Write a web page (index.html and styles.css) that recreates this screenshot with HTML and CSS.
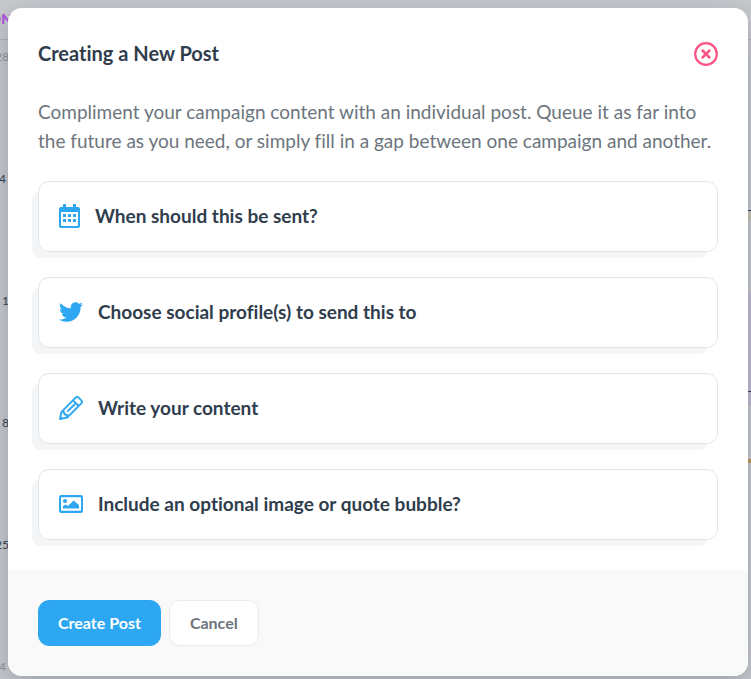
FILE: index.html
```html
<!DOCTYPE html>
<html lang="en">
<head>
    <meta charset="UTF-8">
    <meta name="viewport" content="width=device-width, initial-scale=1.0">
    <title>Creating a New Post</title>
    <link rel="stylesheet" href="styles.css">
</head>
<body>
    <!-- Calendar behind the modal -->
    <div class="calendar">
        <div class="calendar-head"><span>ON</span></div>
        <div class="calendar-row muted"><span>28</span></div>
        <div class="calendar-row"><span class="early">4</span><i class="event navy"></i></div>
        <div class="calendar-row"><span>1</span><i class="event today"></i></div>
        <div class="calendar-row"><span>8</span><i class="event orange"></i></div>
        <div class="calendar-row"><span>25</span></div>
        <div class="calendar-row muted"><span class="early">4</span></div>
    </div>

    <div class="overlay">
        <form class="modal" role="dialog" aria-labelledby="modal-title">
            <div class="modal-body">
                <div class="modal-header">
                    <h1 id="modal-title">Creating a New Post</h1>
                    <button type="button" class="close-btn" aria-label="Close">
                        <svg width="24" height="24" viewBox="0 0 24 24" fill="none" stroke="currentColor">
                            <circle cx="12" cy="12" r="10.8" stroke-width="2.2"/>
                            <path d="M7.900 7.900l8.200 8.200M16.100 7.900l-8.200 8.200" stroke-width="2.700"/>
                        </svg>
                    </button>
                </div>

                <p class="intro">Compliment your campaign content with an individual post. Queue it as far into the future as you need, or simply fill in a gap between one campaign and another.</p>

                <div class="steps">
                    <button type="button" class="step">
                        <svg width="21" height="24" viewBox="0 0 21 24" fill="currentColor">
                            <path fill-rule="evenodd" d="M4 0h3v3h7V0h3v3h2a2 2 0 0 1 2 2v17a2 2 0 0 1-2 2H2a2 2 0 0 1-2-2V5a2 2 0 0 1 2-2h2zM2 8v13.500l.5.5h16l.5-.5V8z"/>
                            <path d="M4 10h3v3H4zM9 10h3v3H9zM14 10h3v3h-3zM4 15h3v3H4zM9 15h3v3H9zM14 15h3v3h-3z"/>
                        </svg>
                        <span>When should this be sent?</span>
                    </button>
                    <button type="button" class="step">
                        <svg width="24" height="24" viewBox="0 0 512 512" fill="currentColor">
                            <path d="M459.370 151.716c.325 4.548.325 9.097.325 13.645 0 138.720-105.583 298.558-298.558 298.558-59.452 0-114.680-17.219-161.137-47.106 8.447.974 16.568 1.299 25.340 1.299 49.055 0 94.213-16.568 130.274-44.832-46.132-.975-84.792-31.188-98.112-72.772 6.498.974 12.995 1.624 19.818 1.624 9.421 0 18.843-1.300 27.614-3.573-48.081-9.747-84.143-51.980-84.143-102.985v-1.299c13.969 7.797 30.214 12.670 47.431 13.319-28.264-18.843-46.781-51.005-46.781-87.391 0-19.492 5.197-37.360 14.294-52.954 51.655 63.675 129.300 105.258 216.365 109.807-1.624-7.797-2.599-15.918-2.599-24.040 0-57.828 46.782-104.934 104.934-104.934 30.213 0 57.502 12.670 76.670 33.137 23.715-4.548 46.456-13.320 66.599-25.340-7.798 24.366-24.366 44.833-46.132 57.827 21.117-2.273 41.584-8.122 60.426-16.243-14.292 20.791-32.161 39.308-52.628 54.253z"/>
                        </svg>
                        <span>Choose social profile(s) to send this to</span>
                    </button>
                    <button type="button" class="step">
                        <svg width="24" height="24" viewBox="0 0 24 24" fill="none" stroke="currentColor" stroke-width="1.9" stroke-linejoin="round">
                            <path d="M1 23l1.500-7.200L16.600 1.700a2.200 2.200 0 0 1 3.100 0l2.600 2.600a2.200 2.200 0 0 1 0 3.100L8.200 21.500z"/>
                            <path d="M14 4.300l5.700 5.700M2.500 15.800l2.700.3.300 2.400 2.400.3.300 2.700M8.300 15.700l7.700-7.700"/>
                            <path d="M1 23l.5-3 2.500 2.500z" fill="currentColor" stroke="none"/>
                        </svg>
                        <span>Write your content</span>
                    </button>
                    <button type="button" class="step">
                        <svg width="24" height="24" viewBox="0 0 24 24" fill="currentColor">
                            <path fill-rule="evenodd" d="M2 3h20a2 2 0 0 1 2 2v14a2 2 0 0 1-2 2H2a2 2 0 0 1-2-2V5a2 2 0 0 1 2-2zm0 2.300v13.400h20V5.300z"/>
                            <circle cx="6" cy="9" r="2"/>
                            <path d="M4 16.500V14l2.500-1.500L9 14l5.500-5.500L20 13v3.500z"/>
                        </svg>
                        <span>Include an optional image or quote bubble?</span>
                    </button>
                </div>
            </div>

            <div class="modal-footer">
                <button type="submit" class="btn btn-primary">Create Post</button>
                <button type="button" class="btn btn-default">Cancel</button>
            </div>
        </form>
    </div>
</body>
</html>
```
FILE: styles.css
```css
* {
    box-sizing: border-box;
}
body {
    margin: 0;
    min-height: 100vh;
    overflow: hidden;
    font-family: Avenir, Lato, sans-serif;
    font-variant-ligatures: none;
    color: #2f3d4d;
    background: #c9cbcf;
}
button {
    font-family: inherit;
    font-variant-ligatures: inherit;
    cursor: pointer;
}

/* Calendar */
.calendar {
    height: 100vh;
    overflow: hidden;
    font-size: 12px;
    line-height: 16px;
}
.calendar-head {
    display: flex;
    height: 40px;
    padding-top: 11px;
    border-bottom: 1px solid #b3b6ba;
    color: #b050e0;
    font-size: 14px;
    font-weight: 900;
}
.calendar-row {
    display: flex;
    justify-content: space-between;
    height: 122px;
    padding-top: 9px;
}
.calendar span {
    display: flex;
    justify-content: flex-end;
    width: 9px;
}
.calendar-head span {
    width: 12px;
}
.calendar .early {
    width: 6px;
}
.muted {
    color: #8f9398;
}
.event {
    width: 3px;
    height: 4px;
}
.navy {
    margin-top: 39px;
    height: 10px;
    border-top: 1px solid #2c3561;
    background: #c9c6b0;
}
.today {
    height: 113px;
    border-bottom: 14px solid #c3bdd4;
    background: linear-gradient(#2c3561, #2c3561) 0 98px / 3px 1px no-repeat #c3bdd4;
}
.orange {
    margin-top: 44px;
    background: #c79a55;
}

/* Modal */
.overlay {
    position: absolute;
    inset: 0;
    padding: 8px 3px 3px 8px;
}
.modal {
    overflow: hidden;
    background: #fff;
    border-radius: 14px;
    box-shadow: 0 8px 30px rgba(60, 70, 85, 0.35);
}
.modal-body {
    padding: 30px;
}
.modal-header {
    display: flex;
    justify-content: space-between;
    height: 32px;
}
h1 {
    margin: 0;
    font-size: 20px;
    line-height: 30px;
}
.close-btn {
    display: flex;
    align-items: center;
    padding: 0;
    border: 0;
    background: none;
    color: #fd5284;
}
.intro {
    margin: 27px 0 26px;
    color: #6c757d;
    font-size: 19px;
    line-height: 29px;
}
.steps {
    display: grid;
    gap: 25px;
}
.step {
    display: flex;
    align-items: center;
    gap: 15px;
    height: 71px;
    padding: 0 20px 2px;
    border: 1px solid #e3e6e9;
    border-radius: 11px;
    background: #fff;
    box-shadow: -8px 8px 0 -2px #f3f5f7;
    color: #2f3d4d;
    font-size: 19px;
    font-weight: 700;
    text-align: left;
}
.step svg {
    flex: none;
    color: #2ea7f2;
}
.modal-footer {
    display: flex;
    gap: 8px;
    padding: 30px;
    background: #f9f9f9;
}
.btn {
    height: 46px;
    padding: 0 19px 2px;
    border: 1px solid #e9eaec;
    border-radius: 11px;
    font-size: 16px;
    font-weight: 700;
}
.btn-primary {
    border-color: #2ea7f2;
    background: #2ea7f2;
    color: #fff;
}
.btn-default {
    padding: 0 20px 2px;
    background: #fff;
    color: #6c757d;
}
```
